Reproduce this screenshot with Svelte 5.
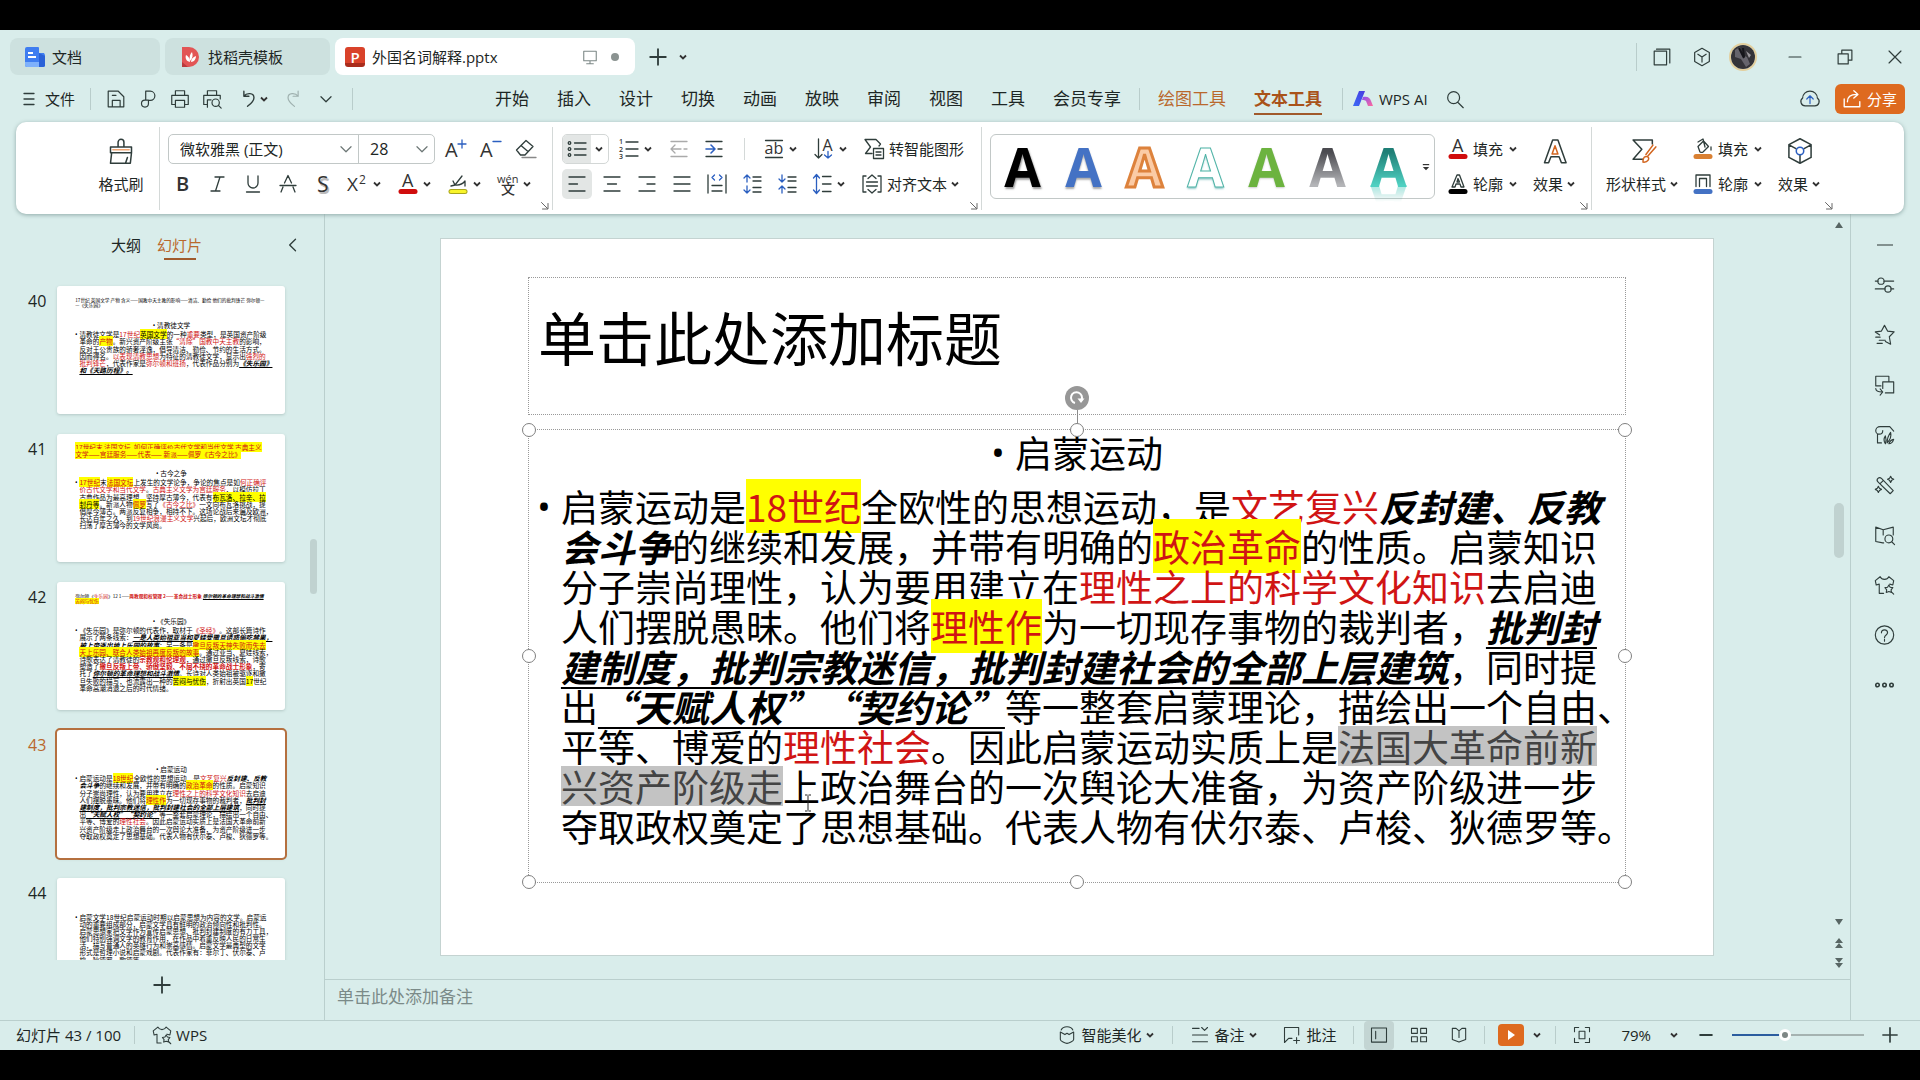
<script>
    const BLUE = '#2b5fc0';
    const ORANGE = '#d2651f';

    // Every icon is a list of strokes or letters on a 24px grid
    const icons = {
        menu: [{ d: 'M7 6.500h10M7 12h10M7 17.500h10' }],
        save: [{ d: 'M3.500 3.500h11l6 6v11h-17zM8 20v-6.500h8.500v6.500M8 8h4' }],
        link: [{ d: 'M9.500 13V3.500h5a5 5 0 0 1 0 10h-2v3.500a3.800 3.800 0 1 1-3.800-3.800h3.800' }],
        print: [{ d: 'M7 8V3h10v5M6.500 18H3V8h18v10h-3.500M7 13.500h10v7.500H7z' }],
        preview: [{ d: 'M7 8V3h10v5M6 18H3V8h18v4M7 21V13h4' }, { d: 'M16 20a4 4 0 1 0 0-8 4 4 0 0 0 0 8zM19 19l3 3' }],
        undo: [{ d: 'M7.500 3.500V9H13M7.500 9c3-4 11-4 11 1.500 0 4-4 7-7 9.500', w: 1.5 }],
        redo: [{ d: 'M16.500 3.500V9H11M16.500 9c-3-4-11-4-11 1.500 0 4 4 7 7 9.500', s: '#9fb1af' }],
        down: [{ d: 'M6.500 9.500L12 15l5.500-5.500' }],
        left: [{ d: 'M15 5l-7 7 7 7', w: 1.6 }],
        plus: [{ d: 'M12 3.500v17M3.500 12h17', w: 2 }],
        minus: [{ d: 'M5 12h14', w: 2.4 }],
        monitor: [{ d: 'M4.500 5h15v11.500h-15zM12 16.500V20M8 20h8', s: '#7c8886' }],
        windows: [{ d: 'M3.500 5.500h13.500v15h-13.500zM6 3.500h14.500v15' }],
        cube: [{ d: 'M12 2.500l8 4.500v10l-8 4.500-8-4.500V7zM7.500 9l4.500 3 4.500-3M12 12v5.500' }],
        restore: [{ d: 'M4.500 8.500h11v11h-11zM8.500 8V4.500h11v11H16' }],
        close: [{ d: 'M5.500 5.500l13 13M18.500 5.500l-13 13' }],
        min: [{ d: 'M5.500 12h13' }],
        search: [{ d: 'M10.500 17a6.500 6.500 0 1 0 0-13 6.500 6.500 0 0 0 0 13zM15 15.500l6 6' }],
        cloud: [{ d: 'M7 19.500a4.700 4.700 0 0 1-3-8.500C4 6.500 7.500 3.500 12 3.500s8 3 8 7.500a4.700 4.700 0 0 1-3 8.500z' }, { d: 'M12 17V9M8.500 12L12 8.500l3.500 3.500', s: BLUE }],
        share: [{ d: 'M3.500 12v8.500h17V15M7 15c0-5 3.500-8 10-8M14 3l4.500 4-4.500 4', s: '#fff', w: 1.5 }],
        brush: [{ d: 'M3 8.500h18v5H3zM9.500 8.500V4.500a2.500 2.500 0 0 1 5 0v4M4 13.500L3 22.500h17l1-9M16 22l1.500-4.500' }, { d: 'M5 11h14', s: '#f0a572' }],
        bigger: [{ t: 'A', x: 2, y: 20, z: 20 }, { d: 'M19 3v8M15 7h8', s: BLUE }],
        smaller: [{ t: 'A', x: 2, y: 20, z: 20 }, { d: 'M15 4.500h8', s: BLUE }],
        eraser: [{ d: 'M3.500 13L13 3.500l7 6L12 18H7.500zM8 8.500l7 6' }, { d: 'M9 20.500h14', s: '#888' }],
        bold: [{ t: 'B', x: 5, y: 19, z: 20, b: 600 }],
        italic: [{ d: 'M9 5h9M5 19h9M14 5L9.500 19' }],
        underline: [{ d: 'M7 4v7a5 5 0 0 0 10 0V4M5.500 20h13' }],
        strike: [{ d: 'M8.500 11L12 3.500l3.500 7.500M4 13.500h16M7 15l-2 5M17 15l2 5' }],
        shadow: [{ t: 'S', x: 7.5, y: 21.5, z: 21, f: '#bbb', b: 600 }, { t: 'S', x: 6, y: 19.5, z: 21, b: 500 }],
        superscript: [{ t: 'X', x: 1, y: 19, z: 19 }, { t: '2', x: 13, y: 12, z: 12 }],
        fontColor: [{ t: 'A', x: 6, y: 14.5, z: 18 }, { d: 'M5 19.500h14', s: '#d00d0d', w: 5 }],
        marker: [{ d: 'M5 14l4-1 7-9M9 13l-2-4M9 13c3 0 6 1 10-4v5' }, { d: 'M5 19.500h14', s: '#a8a51b', w: 5 }, { d: 'M5 19.500h14', s: '#f8f42a', w: 3 }],
        pinyin: [{ t: 'wén', x: 1, y: 11, z: 11, b: 500 }, { t: '文', x: 5, y: 22, z: 14, b: 500 }],
        bullets: [{ d: 'M9.500 6H21M9.500 12H21M9.500 18H21' }, { d: 'M4.500 7.300a1.300 1.300 0 1 0 0-2.600 1.300 1.300 0 0 0 0 2.600zM4.500 13.300a1.300 1.300 0 1 0 0-2.600 1.300 1.300 0 0 0 0 2.600zM4.500 19.300a1.300 1.300 0 1 0 0-2.600 1.300 1.300 0 0 0 0 2.600z' }],
        numbers: [{ d: 'M9 5h12M9 12h12M9 19h12' }, { t: '1', x: 2, y: 7, z: 7, b: 600 }, { t: '2', x: 2, y: 14.5, z: 7, b: 600 }, { t: '3', x: 2, y: 22, z: 7, b: 600 }],
        outdent: [{ d: 'M4 4.500h16M4 19.500h16M4 12h10M8 8l-4 4 4 4M17 12h3', s: '#aaa' }],
        indent: [{ d: 'M4 4.500h16M4 19.500h16M16 12h4' }, { d: 'M4 12h9M9 8l4 4-4 4', s: BLUE, w: 1.6 }],
        ab: [{ d: 'M3.500 3.500h17M3.500 20.500h17' }, { t: 'ab', x: 2.5, y: 17, z: 16 }],
        textDir: [{ d: 'M6.500 2v19M3 17.500L6.500 21l3.500-3.500' }, { t: 'A', x: 10.5, y: 14, z: 16 }, { d: 'M16 14.500v6.500M12.500 18l3.500 3 3.500-3', s: BLUE }],
        smart: [{ d: 'M10 16.500H3.500L8.500 10 3 2.500h11l4.500 4.500-1.500 2M11.500 11.500h10v10h-10zM14 15h5M14 18h5' }],
        alignLeft: [{ d: 'M4 5h16M4 12h8.500M4 19h16' }],
        alignCenter: [{ d: 'M4 5h16M7.500 12h9M4 19h16' }],
        alignRight: [{ d: 'M4 5h16M12 12h8M4 19h16' }],
        justify: [{ d: 'M4 5h16M4 12h16M4 19h16' }],
        distribute: [{ d: 'M3 3v18M21 3v18M7 13.500h10M7 19h10' }, { d: 'M9.500 3L7 5.500 9.500 8M14.500 3L17 5.500 14.500 8', s: BLUE }],
        paraUp: [{ d: 'M13 5h8M13 9h8M13 15.500h8M13 20h8' }, { d: 'M7 10V3M4 6l3-3 3 3M7 14v7M4 18l3 3 3-3', s: BLUE }],
        paraDown: [{ d: 'M13 5h8M13 9h8M13 15.500h8M13 20h8' }, { d: 'M7 3v7M4 7l3 3 3-3M7 21v-7M4 17l3-3 3 3', s: BLUE }],
        lineGap: [{ d: 'M12.500 4.500H21M12.500 12H21M12.500 19.500H21' }, { d: 'M6.500 3v18M3.500 6l3-3.500 3 3.500M3.500 18l3 3.500 3-3.500', s: BLUE }],
        alignText: [{ d: 'M6 4H3v16h3M18 4h3v16h-3M6.500 10h11M6.500 14h11M8 6.500L12 3l4 3.500M8 17.500l4 3.500 4-3.500' }],
        launcher: [{ d: 'M5 5l12 12M18 7v11H7', s: '#666', w: 2 }],
        outlineA: [{ d: 'M6 15L11 3h2.500L18 15h-3l-1-3h-4l-1 3zM11 10l1-3.500 1.500 3.500z' }, { d: 'M5 19.500h14', s: '#000', w: 5 }],
        effectA: [{ d: 'M3 22L10 2.500h4.500L21.500 22h-4l-2-5h-7l-2 5z' }, { d: 'M9.500 14.500l2.500-7 2.500 7z', s: ORANGE }],
        shapeStyle: [{ d: 'M20 6V2.500H3.500l7.500 8-7.500 8.500H12' }, { d: 'M23 8.500l-7 8M20.500 7l-6 8M12 21.500c-.5-4 2-5.500 4-4.500s.500 5-4 4.500z', s: ORANGE }],
        bucket: [{ d: 'M7 9.500L12.500 4l5 5.500L12 15c-1 .8-2 .5-3 0zM7 5l5-3 2 8M20 10v3' }, { d: 'M5 19.500h14', s: '#d98032', w: 5 }],
        shapeLine: [{ d: 'M5 14.500V3h14v11.500M8.500 14.500V6.500h7v8' }, { d: 'M5 19.500h14', s: '#4472c4', w: 5 }],
        hexagon: [{ d: 'M12 1.500l9.500 5v11l-9.500 5-9.500-5v-11zM3 7l5.500 3M21 7l-5.500 3M12 15.500v7' }, { d: 'M12 15.200a3.200 3.200 0 1 0 0-6.400 3.200 3.200 0 0 0 0 6.400z', s: BLUE }],
        sliders: [{ d: 'M1.500 7.500H5M11 7.500h11.500M1.500 16.500H13M19 16.500h3.500M8 11.200a3.600 3.600 0 1 0 0-7.200 3.600 3.600 0 0 0 0 7.200zM16 20.200a3.600 3.600 0 1 0 0-7.200 3.600 3.600 0 0 0 0 7.200z' }],
        star: [{ d: 'M6.500 12L1.500 8.500l7-1L12 1l3.500 6.500 7.500 1-5.500 5.500 1.500 8.500-6-3M2 14.500h5M6 18h7M3.500 21.500h6' }],
        swap: [{ d: 'M8 13H2V2h15v6M10 8.500h12.500v12.500H13M10 8.500V16M2 16c0 3 3 4 7.500 4M7 16.500l3 3.500-3 3.500' }],
        leaf: [{ d: 'M4 11v10h4.500M6 11a4 4 0 0 1-4-4c0-2.500 2-4.500 5-4.500h11l4.500 5M6 11c3 0 4-2 4-4' }, { d: 'M13 22c-2-3-2-6 0-9 1 3 1 6 0 9zM15 21c0-4 1-8 4-12 1 4 0 8-4 12zM17 22c1-3 2.500-4.500 5.500-5-1 3-3 5-5.500 5z' }],
        wand: [{ d: 'M4.500 8.500a2.500 2.500 0 0 1 4-4L22 18.500l-3.500 3.500zM10.500 7L7 10.500M19 2l1.200 2.300L22.500 5.500l-2.300 1.200L19 9l-1.200-2.300L15.500 5.500l2.300-1.200zM5 13.500l1.200 2.300L8.500 17l-2.300 1.200L5 20.500l-1.200-2.300L1.500 17l2.300-1.200z' }],
        book: [{ d: 'M11 21H10L2 19.500V3l8.500 3L22 3v9M10.500 6v6M17 21a4.500 4.500 0 1 0 0-9 4.500 4.500 0 0 0 0 9zM20.500 20l3 3' }],
        shirt: [{ d: 'M11 21.500H6V11L2.500 12 1.500 7 7 2.500c2 4 8 4 10 0L22.500 7l-1 5L18 11M17 12l1.500 2.500 3 .5-2 2.500.5 3-3-1-3 1 .5-3-2-2.500 3-.5zM19.500 19.500l3 3' }],
        help: [{ d: 'M12 22.500a10.500 10.500 0 1 0 0-21 10.500 10.500 0 0 0 0 21zM8.500 9.500c0-4.500 7-4.500 7 0 0 2.500-3.500 2.500-3.500 5.500M12 17v2' }],
        more: [{ d: 'M4 14a2 2 0 1 0 0-4 2 2 0 0 0 0 4zM12 14a2 2 0 1 0 0-4 2 2 0 0 0 0 4zM20 14a2 2 0 1 0 0-4 2 2 0 0 0 0 4z', w: 1.8 }],
        beautify: [{ d: 'M4 8.500v9c0 2 6 4.500 8 4.500s8-2.500 8-4.500v-9l-5.500 3L12 10l-2.500 1.500zM5 6c1-2.500 4-4 7-4s6 1.500 7 4' }],
        notes: [{ d: 'M3 4h8M3 12h18M3 20h18M14 3l3.500 3.500L21 3' }],
        comment: [{ d: 'M12 16H8l-5 5V3h17v9M17.500 15v7M14 18.500h7' }],
        normalView: [{ d: 'M3 3.500h18v17H3zM8 7.500v9' }],
        gridView: [{ d: 'M3 4h7v6H3zM14 4h7v6h-7zM3 14h7v6H3zM14 14h7v6h-7z' }],
        readView: [{ d: 'M12 20.500L4 17.500V4h4.500L12 7l3.500-3H20v13.500zM12 7v8' }],
        fit: [{ d: 'M3 8V3h5M16 3h5v5M21 16v5h-5M8 21H3v-5M8.500 7.500h7v9h-7z' }],
    };

    const tabs = ['开始', '插入', '设计', '切换', '动画', '放映', '审阅', '视图', '工具', '会员专享'];
    const quick = ['save', 'link', 'print', 'preview'];
    const rail = ['sliders', 'star', 'swap', 'leaf', 'wand', 'book', 'shirt', 'help', 'more'];
    const wordArt = ['black', 'blue', 'peach', 'mint', 'green', 'gray', 'teal'];

    // A line is a list of runs: a plain string, or [text, class]
    const slides = [
        {
            no: 40,
            titleClass: 'small',
            title: [['17世纪 英国文学 产物 含义——国教中天主教的影响——清洁、勤俭 他们的批判锋芒 弥尔顿—'], ['—《失乐园》']],
            heading: '清教徒文学',
            lines: [
                ['清教徒文学是', ['17世纪', 'red'], ['英国文学', 'mark'], '的一种', ['重要', 'red'], '类型，是英国资产阶级'],
                ['革命的', ['产物', 'mark red'], '。新兴资产阶级主张', ['“清除”国教中天主教', 'red'], '的影响，'],
                ['反对王公贵族的骄奢淫逸，倡导清洁、勤俭、节约的生活方式。'],
                ['因而得名。', ['以表现清教思想', 'red'], '为特征的清教徒文学，显示出', ['强烈的', 'red']],
                [['批判锋芒', 'red'], '，代表作家是', ['弥尔顿和班扬', 'red'], '，代表作品分别为', ['《失乐园》', 'strong line']],
                [['和《天路历程》。', 'strong line']],
            ],
        },
        {
            no: 41,
            title: [[['17世纪末 法国文坛  如何正确评价古代文学和当代文学 古典主义', 'mark red']], [['文学——宫廷服务——代表—— 新派——佩罗《古今之比》', 'mark red']]],
            heading: '古今之争',
            lines: [
                [['17世纪', 'mark red'], '末', ['法国文坛', 'mark red'], '上发生的文学论争，争论的焦点是如', ['何正确评', 'red']],
                [['价古代文学和当代文学', 'red'], '。', ['古典主义文学为宫廷服务', 'red'], '，以模仿拉丁'],
                ['古典作品为最高理想，坚持厚古薄今，代表有', ['布瓦洛、拉辛、拉', 'mark']],
                [['封丹等', 'mark'], '。新派人物', ['佩罗', 'mark red'], '写了', ['《古今之比》', 'red'], '一文向布瓦洛挑战，提'],
                ['倡厚今薄古。两派反复相争，相持不下。这场论战后来遍及欧洲，'],
                ['长达百年之久，到', ['19世纪浪漫主义文学', 'red'], '兴起后，欧洲文坛才彻底'],
                ['扫荡了厚古薄今的文学风尚。'],
            ],
        },
        {
            no: 42,
            titleClass: 'small',
            title: [['弥尔顿《', ['失乐园', 'red'], '》12 1——', ['两教观和权管理 2——革命战士形象', 'red strong-flat'], ' ', ['弥尔顿的革命理想和战斗激情', 'strong line']], [['苦闷与忧伤', 'mark red']]],
            heading: '《失乐园》',
            lines: [
                ['《失乐园》是弥尔顿的代表作，取材于', ['《圣经》', 'red'], '。这部长篇诗作'],
                ['展示了两条线索：', ['一是人类始祖亚当和夏娃受撒旦诱惑偷吃禁果，', 'strong line']],
                [['被上帝逐出地上乐园的故事', 'strong line'], '；另一条是', ['撒旦反叛天神失败而失去', 'mark red']],
                [['天上乐园、联合人类始祖再度反叛的故事', 'mark red'], '。通过亚当、夏娃线索，'],
                ['诗歌表达了清教徒的', ['宗教观和伦理观', 'red strong-flat'], '，通过撒旦反叛线索，诗歌'],
                ['塑造了', ['撒旦反叛上帝、骄傲坚毅、不屈不挠的革命战士形象', 'red strong-flat'], '，寄'],
                ['托了', ['弥尔顿的革命理想和战斗激情', 'strong line'], '。长诗对人类始祖被驱逐和撒'],
                ['旦失败的描写，也流露出一种的', ['苦闷与忧伤', 'mark'], '，折射出英国', ['17', 'mark'], '世纪'],
                ['革命高潮消退之后的时代情绪。'],
            ],
        },
        {
            no: 43,
            heading: '启蒙运动',
            lines: [
                ['启蒙运动是', ['18世纪', 'mark red'], '全欧性的思想运动，是', ['文艺复兴', 'red'], ['反封建、反教', 'strong']],
                [['会斗争', 'strong'], '的继续和发展，并带有明确的', ['政治革命', 'mark red'], '的性质。启蒙知识'],
                ['分子崇尚理性，认为要用建立在', ['理性之上的科学文化知识', 'red'], '去启迪'],
                ['人们摆脱愚昧。他们将', ['理性作', 'mark red'], '为一切现存事物的裁判者，', ['批判封', 'strong line']],
                [['建制度，批判宗教迷信，批判封建社会的全部上层建筑', 'strong line'], '，同时提'],
                ['出', ['“天赋人权”“契约论”', 'strong line'], '等一整套启蒙理论，描绘出一个自由、'],
                ['平等、博爱的', ['理性社会', 'red'], '。因此启蒙运动实质上是', ['法国大革命前新', 'selected']],
                [['兴资产阶级走', 'selected'], '上政治舞台的一次舆论大准备，为资产阶级进一步'],
                ['夺取政权奠定了思想基础。代表人物有伏尔泰、卢梭、狄德罗等。'],
            ],
        },
        {
            no: 44,
            lines: [
                ['启蒙文学18世纪启蒙运动时期以启蒙思想为内容的文学。启蒙运'],
                ['动的重要组成部分，启蒙文学具有鲜明的政治倾向性和批判性。'],
                ['启蒙思想家把文学作为宣传启蒙思想、批判封建制度的有力工具，'],
                ['他们特别强调文学的教育作用，在作品中着重反映人民的日常生'],
                ['活，描写普通人的英雄行为和崇高感情。启蒙文学最典型的文学'],
                ['形式是哲理小说和启蒙戏剧。代表作家有：菲尔丁、伏尔泰、卢'],
                ['梭、狄德罗、歌德等。'],
            ],
        },
    ];

    const handles = ['nw', 'n', 'ne', 'w', 'e', 'sw', 's', 'se'];

    let current = $state(43);
    let zoom = $state(39);
    let page = $derived(slides.find((s) => s.no === current));
</script>

{#snippet icon(name)}
    <svg class="icon" viewBox="0 0 24 24" aria-hidden="true">
        {#each icons[name] as p}
            {#if p.t}
                <text x={p.x} y={p.y} font-size={p.z} font-weight={p.b ?? 400} fill={p.f ?? '#333'}>{p.t}</text>
            {:else}
                <path d={p.d} fill="none" stroke={p.s ?? '#2f3d3b'} stroke-width={p.w ?? 1.3} stroke-linecap="round" stroke-linejoin="round" />
            {/if}
        {/each}
    </svg>
{/snippet}

{#snippet caret()}
    <svg class="caret" viewBox="0 0 10 10" aria-hidden="true"><path d="M2 3.500l3 3 3-3" fill="none" stroke="#333" stroke-width="1.800" /></svg>
{/snippet}

{#snippet tool(name, label)}
    <button class="tool" aria-label={label}>{@render icon(name)}</button>
{/snippet}

{#snippet drop(name, label)}
    <button class="drop" aria-label={label}>{@render icon(name)}{@render caret()}</button>
{/snippet}

{#snippet textDrop(name, label)}
    <button class="text-drop">{@render icon(name)}<span>{label}</span>{@render caret()}</button>
{/snippet}

{#snippet bigTool(name, label, arrow)}
    <button class="big-tool">
        {@render icon(name)}
        <span class="big-label">{label}{#if arrow}{@render caret()}{/if}</span>
    </button>
{/snippet}

{#snippet launcher()}
    <button class="launcher" aria-label="更多设置">{@render icon('launcher')}</button>
{/snippet}

{#snippet textLine(runs)}
    <div class="text-line">{#each runs as run}{#if typeof run === 'string'}{run}{:else}<span class={run[1]}>{run[0]}</span>{/if}{/each}</div>
{/snippet}

{#snippet slideBody(slide)}
    {#if slide.heading}
        <div class="slide-heading"><span class="dot">•</span><span>{slide.heading}</span></div>
    {/if}
    <div class="slide-para">
        <span class="dot">•</span>
        <div>
            {#each slide.lines as runs}
                {@render textLine(runs)}
            {/each}
        </div>
    </div>
{/snippet}

<div class="app">
    <header class="titlebar">
        <div class="doc-tab docs">
            <svg class="logo" viewBox="0 0 20 20" aria-hidden="true"><path d="M2 0h11a1 1 0 0 1 1 1v5h5l1 2v11l-1 1H2a2 2 0 0 1-2-2V2a2 2 0 0 1 2-2z" fill="#3f7df0" /><path d="M0 15h14v5H2a2 2 0 0 1-2-2z" fill="#7fb1fb" /><path d="M14 6l6 3v10l-2 1h-4z" fill="#2a62d8" /><path d="M3 6h5M3 10h8" stroke="#fff" stroke-width="1.800" /></svg>
            <span>文档</span>
        </div>
        <div class="doc-tab store">
            <svg class="logo" viewBox="0 0 20 20" aria-hidden="true"><path d="M2 0h7a10 10 0 0 1 0 20H2z" fill="#e25555" /><path d="M2 15l6 5H2z" fill="#b93a3d" /><path d="M10 15c-4-1-5-4-4-7 2 1 4 3 4 7zM10 14c-1-4 0-7 2-9 1 3 1 6-2 9zM11 15c0-3 2-5 5-6 0 3-2 6-5 6z" fill="#fff" /></svg>
            <span>找稻壳模板</span>
        </div>
        <div class="doc-tab open">
            <span class="ppt-logo">P</span>
            <span class="file-name">外国名词解释.pptx</span>
            <span class="monitor">{@render icon('monitor')}</span>
            <span class="unsaved"></span>
        </div>
        <button class="new-tab" aria-label="新建">{@render icon('plus')}</button>
        <button class="tab-list" aria-label="标签列表">{@render caret()}</button>
        <div class="window-tools">
            <button class="win" aria-label="窗口">{@render icon('windows')}</button>
            <button class="win" aria-label="应用">{@render icon('cube')}</button>
            <span class="avatar">
                <svg viewBox="0 0 24 24" aria-hidden="true"><circle cx="12" cy="12" r="12" fill="#343338" /><path d="M4 5l5-3 2 8 5 2 3 7-4 3-5-8-6-2z" fill="#66646c" /><path d="M8 3l5 10M12 3l1 9" stroke="#15151a" stroke-width="2" /><path d="M15 6l5 4-2 3z" fill="#9a979c" /></svg>
            </span>
            <button class="win wide" aria-label="最小化">{@render icon('min')}</button>
            <button class="win wide" aria-label="还原">{@render icon('restore')}</button>
            <button class="win wide" aria-label="关闭">{@render icon('close')}</button>
        </div>
    </header>

    <nav class="menubar">
        <div class="menu-left">
            <button class="file-menu">{@render icon('menu')}<span>文件</span></button>
            <i class="sep"></i>
            <div class="quick">
                {#each quick as name}
                    <button class="mini" aria-label={name}>{@render icon(name)}</button>
                {/each}
                <button class="mini undo" aria-label="撤销">{@render icon('undo')}{@render caret()}</button>
                <button class="mini" aria-label="恢复">{@render icon('redo')}</button>
                <button class="mini" aria-label="更多">{@render icon('down')}</button>
            </div>
            <i class="sep"></i>
        </div>
        <div class="menu-tabs">
            {#each tabs as name}
                <a href="#{name}">{name}</a>
            {/each}
        </div>
        <i class="sep"></i>
        <div class="menu-tabs context">
            <a href="#draw">绘图工具</a>
            <a href="#text" class="active">文本工具</a>
        </div>
        <i class="sep"></i>
        <button class="ai">
            <svg viewBox="0 0 20 20" aria-hidden="true">
                <defs>
                    <linearGradient id="aiBlue" x1="0" y1="1" x2="1" y2="0"><stop offset="0" stop-color="#3b6cf6" /><stop offset="1" stop-color="#4a3ae0" /></linearGradient>
                    <linearGradient id="aiPink" x1="0" y1="0" x2="1" y2="1"><stop offset="0" stop-color="#8d4ff0" /><stop offset="1" stop-color="#ff6a9c" /></linearGradient>
                </defs>
                <path d="M0 17L6 2h6L6 17z" fill="url(#aiBlue)" />
                <path d="M10 8c5-1 7 1 8 4l2 5h-5l-2-5c-1-1-2-1-4-1z" fill="url(#aiPink)" />
            </svg>
            <span>WPS AI</span>
        </button>
        <button class="mini" aria-label="搜索">{@render icon('search')}</button>
        <div class="menu-right">
            <button class="mini" aria-label="云同步">{@render icon('cloud')}</button>
            <button class="share">{@render icon('share')}<span>分享</span></button>
        </div>
    </nav>

    <section class="ribbon">
        <div class="group clip">
            {@render bigTool('brush', '格式刷')}
        </div>
        <div class="group font">
            <div class="row">
                <div class="combos">
                    <label class="combo face"><select aria-label="字体"><option>微软雅黑 (正文)</option></select>{@render icon('down')}</label>
                    <label class="combo size"><select aria-label="字号"><option>28</option></select>{@render icon('down')}</label>
                </div>
                {@render tool('bigger', '增大字号')}
                {@render tool('smaller', '减小字号')}
                {@render tool('eraser', '清除格式')}
            </div>
            <div class="row">
                {@render tool('bold', '加粗')}
                {@render tool('italic', '倾斜')}
                {@render tool('underline', '下划线')}
                {@render tool('strike', '删除线')}
                {@render tool('shadow', '阴影')}
                {@render drop('superscript', '上标')}
                {@render drop('fontColor', '字体颜色')}
                {@render drop('marker', '突出显示')}
                {@render drop('pinyin', '拼音指南')}
            </div>
            {@render launcher()}
        </div>
        <div class="group para">
            <div class="row">
                <button class="split" aria-label="项目符号"><span class="split-main">{@render icon('bullets')}</span>{@render caret()}</button>
                {@render drop('numbers', '编号')}
                {@render tool('outdent', '减少缩进')}
                {@render tool('indent', '增加缩进')}
                <i class="row-sep"></i>
                {@render drop('ab', '字符间距')}
                {@render drop('textDir', '文字方向')}
                <button class="text-drop">{@render icon('smart')}<span>转智能图形</span></button>
            </div>
            <div class="row">
                <button class="tool on" aria-label="左对齐">{@render icon('alignLeft')}</button>
                {@render tool('alignCenter', '居中')}
                {@render tool('alignRight', '右对齐')}
                {@render tool('justify', '两端对齐')}
                {@render tool('distribute', '分散对齐')}
                {@render tool('paraUp', '增大段距')}
                {@render tool('paraDown', '减小段距')}
                {@render drop('lineGap', '行距')}
                {@render textDrop('alignText', '对齐文本')}
            </div>
            {@render launcher()}
        </div>
        <div class="group art">
            <div class="body">
                <div class="gallery">
                    {#each wordArt as look}
                        <button class="art-item" aria-label="艺术字 {look}"><span class="art-letter {look}">A</span></button>
                    {/each}
                    <button class="gallery-more" aria-label="更多艺术字">
                        <svg viewBox="0 0 10 10" aria-hidden="true"><path d="M1 2h8" stroke="#333" stroke-width="1.500" /><path d="M1 5h8L5 9z" fill="#333" /></svg>
                    </button>
                </div>
                <div class="stack">
                    {@render textDrop('fontColor', '填充')}
                    {@render textDrop('outlineA', '轮廓')}
                </div>
                {@render bigTool('effectA', '效果', true)}
            </div>
            {@render launcher()}
        </div>
        <div class="group shape">
            <div class="body">
                {@render bigTool('shapeStyle', '形状样式', true)}
                <div class="stack">
                    {@render textDrop('bucket', '填充')}
                    {@render textDrop('shapeLine', '轮廓')}
                </div>
                {@render bigTool('hexagon', '效果', true)}
            </div>
            {@render launcher()}
        </div>
    </section>

    <main class="workspace">
        <aside class="outline">
            <div class="outline-head">
                <button class="outline-tab">大纲</button>
                <button class="outline-tab active">幻灯片</button>
                <button class="collapse" aria-label="收起">{@render icon('left')}</button>
            </div>
            <div class="thumbs">
                {#each slides as slide (slide.no)}
                    <button class="thumb-row" class:active={slide.no === current} onclick={() => (current = slide.no)}>
                        <span class="thumb-no">{slide.no}</span>
                        <span class="thumb">
                            <span class="thumb-page">
                                <span class="title-box {slide.titleClass ?? 'medium'}">
                                    {#each slide.title ?? [] as runs}
                                        {@render textLine(runs)}
                                    {/each}
                                </span>
                                <span class="body-box">{@render slideBody(slide)}</span>
                            </span>
                        </span>
                    </button>
                {/each}
                <i class="thumb-scroll"></i>
            </div>
            <button class="add-slide" aria-label="新建幻灯片">{@render icon('plus')}</button>
        </aside>

        <div class="editor">
            <div class="canvas">
                <div class="stage">
                    <article class="slide">
                        <div class="title-box edit">
                            {#if page.title}
                                {#each page.title as runs}
                                    {@render textLine(runs)}
                                {/each}
                            {:else}
                                单击此处添加标题
                            {/if}
                        </div>
                        <div class="body-box edit">
                            {@render slideBody(page)}
                            {#each handles as side}
                                <i class="handle {side}"></i>
                            {/each}
                            <i class="stem"></i>
                            <svg class="rotate" viewBox="0 0 24 24" aria-hidden="true"><circle cx="12" cy="12" r="12" fill="#979797" /><path d="M10 17a5.500 5.500 0 1 1 6.500-3" fill="none" stroke="#fff" stroke-width="2" /><path d="M12.500 12.500h7l-3.500 4.500z" fill="#fff" /></svg>
                            <svg class="ibeam" viewBox="0 0 8 18" aria-hidden="true"><path d="M1 1h2.500M4.500 1H7M4 1.500v15M1 17h2.500M4.500 17H7" stroke="#222" fill="none" /></svg>
                        </div>
                    </article>
                </div>
                <div class="vscroll">
                    <i class="arrow up"></i>
                    <i class="track"><i class="grip"></i></i>
                    <i class="arrow down"></i>
                    <svg class="jump" viewBox="0 0 10 12" aria-hidden="true"><path d="M1 6l4-5 4 5zM1 11l4-5 4 5z" fill="#586664" /></svg>
                    <svg class="jump" viewBox="0 0 10 12" aria-hidden="true"><path d="M1 1l4 5 4-5zM1 6l4 5 4-5z" fill="#586664" /></svg>
                </div>
            </div>
            <textarea class="notes" aria-label="备注" placeholder="单击此处添加备注"></textarea>
        </div>

        <aside class="rail">
            <i class="rail-grip"></i>
            {#each rail as name}
                <button aria-label={name}>{@render icon(name)}</button>
            {/each}
        </aside>
    </main>

    <footer class="status">
        <span class="counter">幻灯片 {current} / 100</span>
        <i class="sep"></i>
        <button class="stat shirt">{@render icon('shirt')}<span>WPS</span></button>
        <div class="status-right">
            <button class="stat">{@render icon('beautify')}<span>智能美化</span>{@render caret()}</button>
            <i class="sep"></i>
            <button class="stat">{@render icon('notes')}<span>备注</span>{@render caret()}</button>
            <button class="stat comment">{@render icon('comment')}<span>批注</span></button>
            <i class="sep"></i>
            <div class="views">
                <button class="view on" aria-label="普通视图">{@render icon('normalView')}</button>
                <button class="view" aria-label="幻灯片浏览">{@render icon('gridView')}</button>
                <button class="view" aria-label="阅读视图">{@render icon('readView')}</button>
            </div>
            <i class="sep"></i>
            <button class="play" aria-label="放映">
                <svg viewBox="0 0 10 10" aria-hidden="true"><path d="M2 0l7 5-7 5z" fill="#fff" /></svg>
            </button>
            <button class="stat play-more" aria-label="放映选项">{@render caret()}</button>
            <i class="sep"></i>
            <button class="view fit" aria-label="最佳显示比例">{@render icon('fit')}</button>
            <button class="stat percent"><span>79%</span>{@render caret()}</button>
            <button class="view" aria-label="缩小">{@render icon('minus')}</button>
            <input class="zoom" type="range" aria-label="缩放" bind:value={zoom} style="--fill: {zoom}%" />
            <button class="view" aria-label="放大">{@render icon('plus')}</button>
        </div>
    </footer>
</div>

<style>
    :global(body) {
        background: #000;
    }

    .app {
        display: flex;
        flex-direction: column;
        height: calc(100vh - 60px);
        margin: 30px 0;
        background: #d9edeb;
        color: #1d2624;
        font: 15px/20px "Open Sans", "Noto Sans CJK SC", sans-serif;
        overflow: hidden;
    }

    button,
    select,
    textarea {
        font: inherit;
        color: inherit;
        background: none;
        border: 0;
        padding: 0;
        margin: 0;
    }

    button {
        display: flex;
        align-items: center;
        flex: none;
        white-space: nowrap;
    }

    svg {
        display: block;
        flex: none;
    }

    .icon {
        width: 24px;
        height: 24px;
        font-family: "Open Sans", "Noto Sans CJK SC", sans-serif;
        overflow: visible;
    }

    .caret {
        width: 10px;
        height: 10px;
    }

    .sep {
        flex: none;
        width: 1px;
        height: 22px;
        background: #b9cdcb;
    }

    /* title bar */
    .titlebar {
        display: flex;
        align-items: center;
        gap: 5px;
        padding: 8px 0 3px 10px;
    }

    .doc-tab {
        display: flex;
        align-items: center;
        box-sizing: border-box;
        height: 37px;
        padding: 0 15px;
        gap: 8px;
        border-radius: 8px;
        background: #cde1df;
    }

    .docs {
        width: 150px;
        gap: 7px;
    }

    .store {
        width: 165px;
    }

    .open {
        width: 300px;
        padding: 0 16px 0 10px;
        gap: 7px;
        background: #fff;
    }

    .logo,
    .ppt-logo {
        width: 20px;
        height: 20px;
    }

    .ppt-logo {
        border-radius: 3px;
        background: linear-gradient(#d9422a 80%, #a92c1c 80%);
        color: #fff;
        font-weight: 600;
        text-align: center;
    }

    .file-name {
        flex: 1;
    }

    .monitor .icon {
        width: 20px;
        height: 20px;
    }

    .unsaved {
        width: 8px;
        height: 8px;
        margin-left: 4px;
        border-radius: 50%;
        background: #8b9391;
    }

    .new-tab {
        margin-left: 7px;
    }

    .new-tab .icon {
        width: 22px;
        height: 22px;
    }

    .tab-list {
        margin-left: 4px;
    }

    .window-tools {
        display: flex;
        align-items: center;
        margin-left: auto;
        border-left: 1px solid #b9cdcb;
    }

    .win {
        justify-content: center;
        width: 40px;
        margin-left: 5px;
        margin-right: -5px;
    }

    .win .icon {
        width: 22px;
        height: 22px;
    }

    .wide {
        width: 50px;
        margin: 0;
    }

    .avatar {
        margin: 0 13px 0 12px;
        border: 2px solid #e3cf9d;
        border-radius: 50%;
    }

    .avatar svg {
        width: 24px;
        height: 24px;
    }

    /* menu bar */
    .menubar {
        display: flex;
        align-items: center;
        height: 42px;
        padding: 0 15px 2px 17px;
    }

    .menu-left {
        display: flex;
        align-items: center;
        width: 478px;
    }

    .file-menu {
        gap: 4px;
        width: 73px;
    }

    .quick {
        display: flex;
        width: 259px;
        padding-left: 9px;
        box-sizing: border-box;
        margin-right: 2px;
    }

    .mini {
        justify-content: center;
        width: 32px;
        height: 30px;
    }

    .mini .icon {
        width: 22px;
        height: 22px;
    }

    .undo {
        width: 50px;
    }

    .menu-tabs {
        display: flex;
        gap: 28px;
        margin-right: 18px;
        font-size: 17px;
        line-height: 24px;
        white-space: nowrap;
    }

    .menu-tabs a {
        color: #1d2624;
        text-decoration: none;
    }

    .context {
        margin: 0 20px 0 18px;
    }

    .menu-tabs.context a {
        color: #b9682c;
    }

    .menu-tabs.context .active {
        color: #a9531a;
        font-weight: 700;
        box-shadow: 0 2px #d9edeb, 0 4px #a05a2c;
    }

    .ai {
        gap: 6px;
        margin: 0 11px 0 10px;
    }

    .ai svg {
        width: 20px;
        height: 20px;
    }

    .menu-right {
        display: flex;
        align-items: center;
        gap: 9px;
        margin-left: auto;
    }

    .share {
        gap: 4px;
        height: 30px;
        padding: 0 8px 0 6px;
        border-radius: 6px;
        background: #de6a1f;
        color: #fff;
    }

    .share .icon {
        width: 22px;
        height: 22px;
    }

    /* ribbon */
    .ribbon {
        display: flex;
        position: relative;
        height: 92px;
        margin: 0 16px;
        border-radius: 10px;
        background: #fff;
        box-shadow: 0 1px 4px #8fa9a7;
    }

    .group {
        display: flex;
        flex-direction: column;
        flex: none;
        gap: 5px;
        box-sizing: border-box;
        padding: 12px 0 0 9px;
    }

    .group + .group {
        background: linear-gradient(#d4d9d8, #d4d9d8) 0 5px / 1px 83px no-repeat;
    }

    .clip {
        width: 143px;
        padding-left: 67px;
    }

    .font {
        width: 393px;
    }

    .para {
        width: 429px;
        padding-left: 10px;
    }

    .art {
        width: 610px;
    }

    .shape {
        width: 245px;
        padding-left: 15px;
    }

    .row {
        display: flex;
        gap: 5px;
        height: 30px;
    }

    .tool {
        justify-content: center;
        width: 30px;
        border-radius: 5px;
    }

    .on {
        background: #e3e6e5;
    }

    .drop {
        gap: 2px;
        width: 45px;
        padding-left: 3px;
    }

    .split {
        box-sizing: border-box;
        width: 47px;
        border: 1px solid #d3d7d6;
        border-radius: 5px;
        overflow: hidden;
        gap: 3px;
    }

    .split-main {
        display: flex;
        align-items: center;
        width: 28px;
        height: 28px;
        padding-left: 2px;
        box-sizing: border-box;
        background: #e3e6e5;
    }

    .row-sep {
        width: 20px;
        background: linear-gradient(#d4d9d8, #d4d9d8) center / 1px 22px no-repeat;
    }

    .text-drop {
        gap: 3px;
        height: 30px;
        padding-left: 3px;
    }

    .combos {
        display: flex;
        box-sizing: border-box;
        width: 267px;
        border: 1px solid #c2c8c7;
        border-radius: 5px;
    }

    .combo {
        display: grid;
        align-items: center;
        justify-items: end;
    }

    .combo > :global(*) {
        grid-area: 1 / 1;
    }

    .combo .icon {
        margin-right: 1px;
        width: 22px;
        opacity: 0.7;
        pointer-events: none;
    }

    .combo select {
        width: 100%;
        height: 28px;
        padding-left: 11px;
        appearance: none;
        outline: none;
    }

    .face {
        width: 189px;
        border-right: 1px solid #c2c8c7;
    }

    .size {
        flex: 1;
        font-size: 16px;
    }

    .launcher {
        align-self: flex-end;
        width: 10px;
        height: 10px;
        margin: -3px 3px 0 0;
    }

    .launcher .icon {
        width: 12px;
        height: 12px;
    }

    .body {
        display: flex;
        height: 65px;
    }

    .big-tool {
        flex-direction: column;
        gap: 9px;
        padding-top: 3px;
        height: 60px;
    }

    .big-tool .icon {
        width: 28px;
        height: 28px;
    }

    .big-label {
        display: flex;
        align-items: center;
        gap: 3px;
    }

    .stack {
        display: flex;
        flex-direction: column;
        gap: 5px;
        width: 98px;
        padding-left: 8px;
        box-sizing: border-box;
    }

    .stack .caret {
        margin-left: 2px;
    }

    .shape .stack {
        width: 87px;
        padding-left: 9px;
    }

    .shape .stack + :global(.big-tool) {
        margin-left: 12px;
    }

    .gallery {
        display: flex;
        align-items: center;
        box-sizing: border-box;
        width: 445px;
        border: 1px solid #c2c8c7;
        border-radius: 6px;
        padding-left: 1px;
    }

    .art-item {
        justify-content: center;
        width: 61px;
        height: 60px;
    }

    .art-letter {
        font: 700 53px/60px "Open Sans", sans-serif;
    }

    .gallery-more {
        padding-left: 3px;
    }

    .gallery-more svg {
        width: 8px;
        height: 8px;
    }

    .black {
        color: #000;
        text-shadow: 1px 2px 2px #999;
    }

    .blue {
        color: #4472c4;
        text-shadow: 0 2px 2px #aaa;
    }

    .peach {
        color: #fbcba5;
        -webkit-text-stroke: 3px #dd823c;
    }

    .mint {
        color: #fff;
        -webkit-text-stroke: 1px #4fb3a6;
        text-shadow: 0 2px 2px #9cc;
    }

    .green {
        color: #6cb33f;
        text-shadow: 0 1px 2px #ccc;
    }

    .gray,
    .teal {
        color: transparent;
        background: linear-gradient(#4b4b50 25%, #b4b5b8 80%);
        background-clip: text;
    }

    .teal {
        background-image: linear-gradient(#1f7f76 25%, #4fd0c1 80%);
        -webkit-box-reflect: below -22px linear-gradient(transparent 55%, #000c);
    }

    /* slide list */
    .workspace {
        display: flex;
        flex: 1;
        min-height: 0;
    }

    .outline {
        display: flex;
        flex-direction: column;
        box-sizing: border-box;
        width: 325px;
        border-right: 1px solid #bacfcd;
    }

    .outline-head {
        display: flex;
        align-items: center;
        gap: 16px;
        height: 62px;
        padding: 0 21px 0 111px;
        margin-bottom: 8px;
    }

    .outline-tab.active {
        color: #b9682c;
        background: linear-gradient(#a05a2c, #a05a2c) center bottom / 32px 2px no-repeat;
    }

    .outline-tab {
        height: 30px;
    }

    .collapse {
        margin-left: auto;
    }

    .collapse .icon {
        width: 20px;
        height: 20px;
    }

    .thumbs {
        position: relative;
        display: flex;
        flex-direction: column;
        flex: 1;
        gap: 20px;
        min-height: 0;
        padding-top: 2px;
        overflow: hidden;
    }

    .thumb-row {
        align-items: flex-start;
        text-align: left;
    }

    .thumb-no {
        width: 29px;
        padding-left: 28px;
        font-size: 16px;
        line-height: 30px;
    }

    .thumb {
        display: block;
        width: 228px;
        height: 128px;
        border-radius: 3px;
        background: #fff;
        box-shadow: 0 1px 3px #b3c8c6;
        overflow: hidden;
    }

    .thumb-row.active .thumb-no {
        color: #b9682c;
    }

    .thumb-row.active .thumb {
        outline: 2px solid #b5703f;
    }

    .thumb-page {
        display: block;
        box-sizing: border-box;
        width: 1272px;
        padding: 38px 87px;
        zoom: 0.18;
    }

    .thumb-scroll {
        position: absolute;
        top: 255px;
        right: 7px;
        width: 7px;
        height: 55px;
        border-radius: 4px;
        background: #c0d2d0;
    }

    .add-slide {
        justify-content: center;
        height: 60px;
        padding-bottom: 10px;
    }

    .add-slide .icon {
        width: 22px;
        height: 22px;
    }

    /* slide */
    .editor {
        display: flex;
        flex-direction: column;
        flex: 1;
        min-width: 0;
    }

    .canvas {
        display: flex;
        flex: 1;
        min-height: 0;
    }

    .stage {
        flex: 1;
        min-width: 0;
        padding: 25px 115px 0 116px;
    }

    .slide {
        box-sizing: border-box;
        aspect-ratio: 16 / 9;
        padding: 38px 87px;
        background: #fff;
        outline: 1px solid #c4d3d1;
    }

    .title-box,
    .body-box {
        display: block;
        box-sizing: border-box;
        border: 1px dotted transparent;
        color: #000;
        font-family: "Noto Sans CJK SC", sans-serif;
        text-spacing-trim: space-all;
        white-space: nowrap;
    }

    .title-box {
        display: flex;
        flex-direction: column;
        justify-content: center;
        height: 138px;
        padding: 0 8px 20px 9px;
        margin-bottom: 14px;
        font-size: 58px;
        line-height: 64px;
    }

    .title-box.medium {
        font-size: 37px;
        line-height: 40px;
    }

    .title-box.small {
        font-size: 26px;
        line-height: 30px;
    }

    .body-box {
        position: relative;
        height: 454px;
        padding: 2px 0 0 8px;
        font-size: 37px;
        line-height: 40px;
    }

    .edit {
        border-color: #999;
    }

    .slide-heading {
        display: flex;
        justify-content: center;
        gap: 10px;
        margin-bottom: 14px;
        padding-right: 8px;
    }

    .slide-para {
        display: flex;
        gap: 10px;
    }

    .dot {
        width: 14px;
        font-family: "Open Sans", sans-serif;
        text-align: center;
    }

    .text-line {
        height: 40px;
        line-height: 40px;
        white-space: pre;
    }

    .small .text-line {
        height: 30px;
        line-height: 30px;
    }

    .red {
        color: #d01414;
    }

    .mark {
        background: #ff0;
    }

    .strong,
    .strong-flat {
        font-weight: 700;
    }

    .strong {
        font-style: italic;
    }

    .line {
        text-decoration: underline 2px;
        text-underline-offset: 5px;
    }

    .selected {
        display: inline-block;
        background: #c3c3c3;
        color: #444;
    }

    .thumb .selected {
        background: none;
        color: inherit;
    }

    .handle {
        position: absolute;
        width: 12px;
        height: 12px;
        margin: -7px;
        border: 1px solid #7f7f7f;
        border-radius: 50%;
        background: #fff;
    }

    .nw, .n, .ne { top: 0; }
    .w, .e { top: 50%; }
    .sw, .s, .se { top: 100%; }
    .nw, .w, .sw { left: 0; }
    .n, .s { left: 50%; }
    .ne, .e, .se { left: 100%; }

    .stem {
        position: absolute;
        left: 50%;
        top: -20px;
        width: 1px;
        height: 13px;
        background: #8c8c8c;
    }

    .rotate {
        position: absolute;
        left: 50%;
        top: -44px;
        width: 24px;
        height: 24px;
        margin-left: -12px;
    }

    .ibeam {
        position: absolute;
        left: 275px;
        top: 364px;
        width: 8px;
        height: 18px;
    }

    .vscroll {
        display: flex;
        flex-direction: column;
        align-items: center;
        gap: 8px;
        width: 22px;
        padding: 8px 0 10px;
    }

    .arrow {
        border: 4px solid transparent;
    }

    .up {
        margin-top: -4px;
        border-bottom: 6px solid #586664;
    }

    .down {
        border-top: 6px solid #586664;
    }

    .track {
        display: flex;
        align-items: center;
        flex: 1;
    }

    .grip {
        width: 10px;
        height: 55px;
        margin-bottom: 86px;
        border-radius: 5px;
        background: #c0d2d0;
    }

    .jump {
        width: 10px;
        height: 12px;
    }

    .notes {
        box-sizing: border-box;
        height: 41px;
        padding: 6px 12px;
        border-top: 1px solid #bacfcd;
        font-size: 17px;
        line-height: 22px;
        resize: none;
        outline: none;
    }

    .notes::placeholder {
        color: #7b8a88;
    }

    .rail {
        display: flex;
        flex-direction: column;
        align-items: center;
        gap: 26px;
        box-sizing: border-box;
        width: 70px;
        padding: 30px 2px 0 0;
        border-left: 1px solid #bacfcd;
    }

    .rail-grip {
        width: 16px;
        height: 2px;
        margin-bottom: 1px;
        background: #82918f;
    }

    .rail .icon {
        width: 21px;
        height: 24px;
    }

    /* status bar */
    .status {
        display: flex;
        align-items: center;
        flex: none;
        gap: 10px;
        box-sizing: border-box;
        height: 30px;
        padding: 0 15px 1px 16px;
        border-top: 1px solid #bacfcd;
    }

    .status .sep {
        height: 18px;
    }

    .counter {
        margin-right: 3px;
    }

    .stat {
        gap: 4px;
    }

    .stat .icon,
    .view .icon {
        width: 20px;
        height: 20px;
    }

    .shirt {
        margin-left: 7px;
    }

    .status-right {
        display: flex;
        align-items: center;
        gap: 17px;
        margin-left: auto;
    }

    .comment {
        margin-left: 7px;
    }

    .views {
        display: flex;
        gap: 10px;
        margin: 0 -7px;
    }

    .view {
        justify-content: center;
        width: 30px;
        height: 29px;
        border-radius: 4px;
    }

    .view.on {
        background: #c3d5d3;
    }

    .play {
        justify-content: center;
        width: 26px;
        height: 22px;
        margin: 0 -9px 0 -4px;
        border-radius: 4px;
        background: #de6a1f;
    }

    .play svg {
        width: 10px;
        height: 10px;
    }

    .play-more {
        margin-right: -4px;
    }

    .fit {
        margin-left: -6px;
    }

    .percent {
        gap: 18px;
        margin: 0 -5px 0 7px;
    }

    .zoom {
        width: 132px;
        height: 16px;
        margin: 0 -6px;
        appearance: none;
        background: linear-gradient(90deg, #2b5d9f var(--fill), #a5b3b1 var(--fill)) center / 100% 2px no-repeat;
    }

    .zoom::-webkit-slider-thumb {
        appearance: none;
        width: 12px;
        height: 12px;
        border: 3px solid #fff;
        border-radius: 50%;
        background: #7d8785;
    }
</style>
